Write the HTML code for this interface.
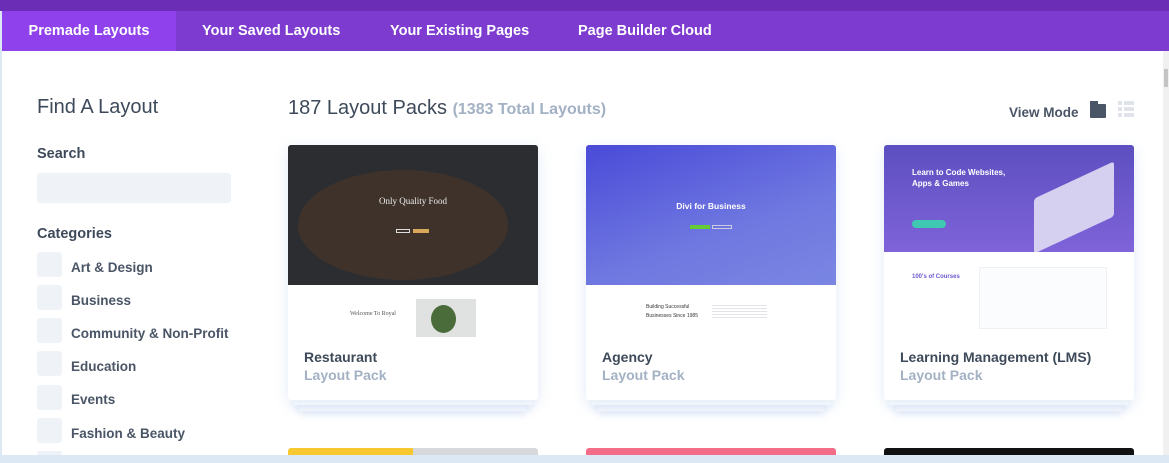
<!DOCTYPE html>
<html style="width:1169px;height:463px;overflow:hidden"><head><style>
*{margin:0;padding:0;box-sizing:border-box}
body{width:1169px;height:463px;overflow:hidden;background:#dde8f5;font-family:"Liberation Sans",sans-serif;position:relative}
.top{position:absolute;left:0;top:0;width:1169px;height:11px;background:#6b2db6}
.tabs{position:absolute;left:2px;top:11px;width:1167px;height:40px;background:#7e3bd0}
.tab{position:absolute;top:0;height:40px;line-height:41px;color:#fff;font-weight:bold;font-size:14.5px}
.main{position:absolute;left:2px;top:51px;width:1161px;height:404px;background:#fff}
.scroll{position:absolute;left:1163px;top:51px;width:6px;height:404px;background:#f0f0f1}
.h{position:absolute;color:#3e4a5a;font-weight:bold}
.cb{position:absolute;left:37px;width:25px;height:25px;background:#eff3f8;border-radius:3px}
.cl{position:absolute;left:71px;font-size:13.5px;color:#4a5566;font-weight:bold}
.card{position:absolute;top:145px;width:250px;height:255px;background:#fff;border-radius:3px;box-shadow:0 4px 14px rgba(120,160,220,.22)}
.s1,.s2{position:absolute;height:6px;background:#fff;box-shadow:0 3px 8px rgba(120,160,220,.25)}
.img{position:absolute;left:0;top:0;width:250px;height:140px;border-radius:3px 3px 0 0;overflow:hidden}
.t1{position:absolute;left:16px;top:204px;font-size:14px;color:#3e4a5a;font-weight:bold}
.t2{position:absolute;left:16px;top:222px;font-size:14px;color:#a3b1c4;font-weight:bold}
.c2{position:absolute;top:448px;width:250px;height:7px;border-radius:3px 3px 0 0}
</style></head><body>
<div class="top"></div>
<div class="tabs">
<div class="tab" style="left:0;width:174px;background:#8f42ec;text-align:center">Premade Layouts</div>
<div class="tab" style="left:200px">Your Saved Layouts</div>
<div class="tab" style="left:388px">Your Existing Pages</div>
<div class="tab" style="left:576px">Page Builder Cloud</div>
</div>
<div class="main"></div>
<div class="scroll"><div style="position:absolute;left:1px;top:18px;width:4px;height:18px;background:#c4c4c4"></div></div>
<div class="h" style="left:37px;top:96px;font-size:20px;font-weight:normal;color:#3e4a5a">Find A Layout</div>
<div class="h" style="left:37px;top:146px;font-size:14.5px">Search</div>
<div style="position:absolute;left:37px;top:173px;width:194px;height:30px;background:#eff3f8;border-radius:3px"></div>
<div class="h" style="left:37px;top:226px;font-size:14.5px">Categories</div>
<div class="cb" style="top:252px"></div><div class="cl" style="top:260px">Art &amp; Design</div>
<div class="cb" style="top:285px"></div><div class="cl" style="top:293px">Business</div>
<div class="cb" style="top:318px"></div><div class="cl" style="top:326px">Community &amp; Non-Profit</div>
<div class="cb" style="top:351px"></div><div class="cl" style="top:359px">Education</div>
<div class="cb" style="top:385px"></div><div class="cl" style="top:392px">Events</div>
<div class="cb" style="top:418px"></div><div class="cl" style="top:426px">Fashion &amp; Beauty</div>
<div class="cb" style="top:451px;height:4px"></div>
<div style="position:absolute;left:288px;top:97px;font-size:20px;color:#3e4a5a">187 Layout Packs <span style="font-size:16px;color:#a3b1c4;font-weight:bold">(1383 Total Layouts)</span></div>
<div style="position:absolute;left:1009px;top:105px;font-size:13.5px;font-weight:bold;color:#4a5566">View Mode</div>
<div style="position:absolute;left:1090px;top:104px;width:16px;height:14px;background:#4a5566;border-radius:1px"></div>
<div style="position:absolute;left:1090px;top:101px;width:8px;height:4px;background:#4a5566"></div>
<svg style="position:absolute;left:1118px;top:101px" width="16" height="17"><g fill="#e0e4ea"><rect x="0" y="0" width="4" height="4"/><rect x="6" y="0" width="10" height="4"/><rect x="0" y="6" width="4" height="4"/><rect x="6" y="6" width="10" height="4"/><rect x="0" y="12" width="4" height="4"/><rect x="6" y="12" width="10" height="4"/></g></svg>

<div class="s2" style="left:300px;top:405px;width:226px"></div><div class="s1" style="left:294px;top:399px;width:238px"></div>
<div class="card" style="left:288px">
 <div class="img" style="background:#2f3032">
  <div style="position:absolute;left:10px;top:25px;width:210px;height:110px;border-radius:50%;background:#5a3c25;opacity:.8"></div>
  <div style="position:absolute;left:0;top:0;width:250px;height:140px;background:rgba(40,42,46,.45)"></div>
  <div style="position:absolute;width:250px;top:51px;text-align:center;color:#eee;font-family:'Liberation Serif',serif;font-size:9px">Only Quality Food</div>
  <div style="position:absolute;left:108px;top:84px;width:14px;height:4px;border:1px solid #ddd"></div>
  <div style="position:absolute;left:125px;top:84px;width:16px;height:4px;background:#d7a85a"></div>
 </div>
 <div style="position:absolute;left:62px;top:166px;font-size:6px;font-family:'Liberation Serif',serif;color:#555">Welcome To Royal</div>
 <div style="position:absolute;left:128px;top:154px;width:60px;height:38px;background:#dfe2e0"><div style="margin:6px 0 0 15px;width:25px;height:28px;border-radius:50%;background:#4a6b3a"></div></div>
 <div class="t1">Restaurant</div><div class="t2">Layout Pack</div>
</div>

<div class="s2" style="left:598px;top:405px;width:226px"></div><div class="s1" style="left:592px;top:399px;width:238px"></div>
<div class="card" style="left:586px">
 <div class="img" style="background:linear-gradient(160deg,#4a4ad8,#6f78e0 60%,#7a86e2)">
  <div style="position:absolute;width:250px;top:56px;text-align:center;color:#fff;font-weight:bold;font-size:8.5px">Divi for Business</div>
  <div style="position:absolute;left:104px;top:80px;width:20px;height:4px;background:#6c3"></div>
  <div style="position:absolute;left:126px;top:80px;width:20px;height:4px;border:1px solid #ccd"></div>
 </div>
 <div style="position:absolute;left:60px;top:158px;font-size:5px;color:#333;line-height:9px">Building Successful<br>Businesses Since 1985</div>
 <div style="position:absolute;left:126px;top:160px;width:55px;height:14px;background:repeating-linear-gradient(#e2e4ea 0 1px,transparent 1px 3px)"></div>
 <div class="t1">Agency</div><div class="t2">Layout Pack</div>
</div>

<div class="s2" style="left:896px;top:405px;width:226px"></div><div class="s1" style="left:890px;top:399px;width:238px"></div>
<div class="card" style="left:884px">
 <div class="img" style="background:linear-gradient(180deg,#5c4fc0,#7f63d9);height:107px">
  <div style="position:absolute;left:28px;top:22px;color:#fff;font-weight:bold;font-size:8px;line-height:11px">Learn to Code Websites,<br>Apps &amp; Games</div>
  <div style="position:absolute;left:28px;top:75px;width:34px;height:8px;border-radius:4px;background:#3ec9b0"></div>
  <div style="position:absolute;left:150px;top:35px;width:80px;height:55px;background:#d5cff0;transform:skewY(-25deg);border-radius:3px"></div>
 </div>
 <div style="position:absolute;left:28px;top:129px;font-size:6px;color:#6a5ad0;font-weight:bold">100's of Courses</div>
 <div style="position:absolute;left:95px;top:122px;width:128px;height:62px;border:1px solid #eef0f4;background:#fbfcfd"></div>
 <div class="t1">Learning Management (LMS)</div><div class="t2">Layout Pack</div>
</div>

<div class="c2" style="left:288px;background:linear-gradient(90deg,#f8c830 50%,#d6d8dc 50%)"></div>
<div class="c2" style="left:586px;background:#f36c88"></div>
<div class="c2" style="left:884px;background:#111"></div>
<div style="position:absolute;left:0;top:455px;width:1169px;height:8px;background:#dde8f5"></div>
</body></html>
